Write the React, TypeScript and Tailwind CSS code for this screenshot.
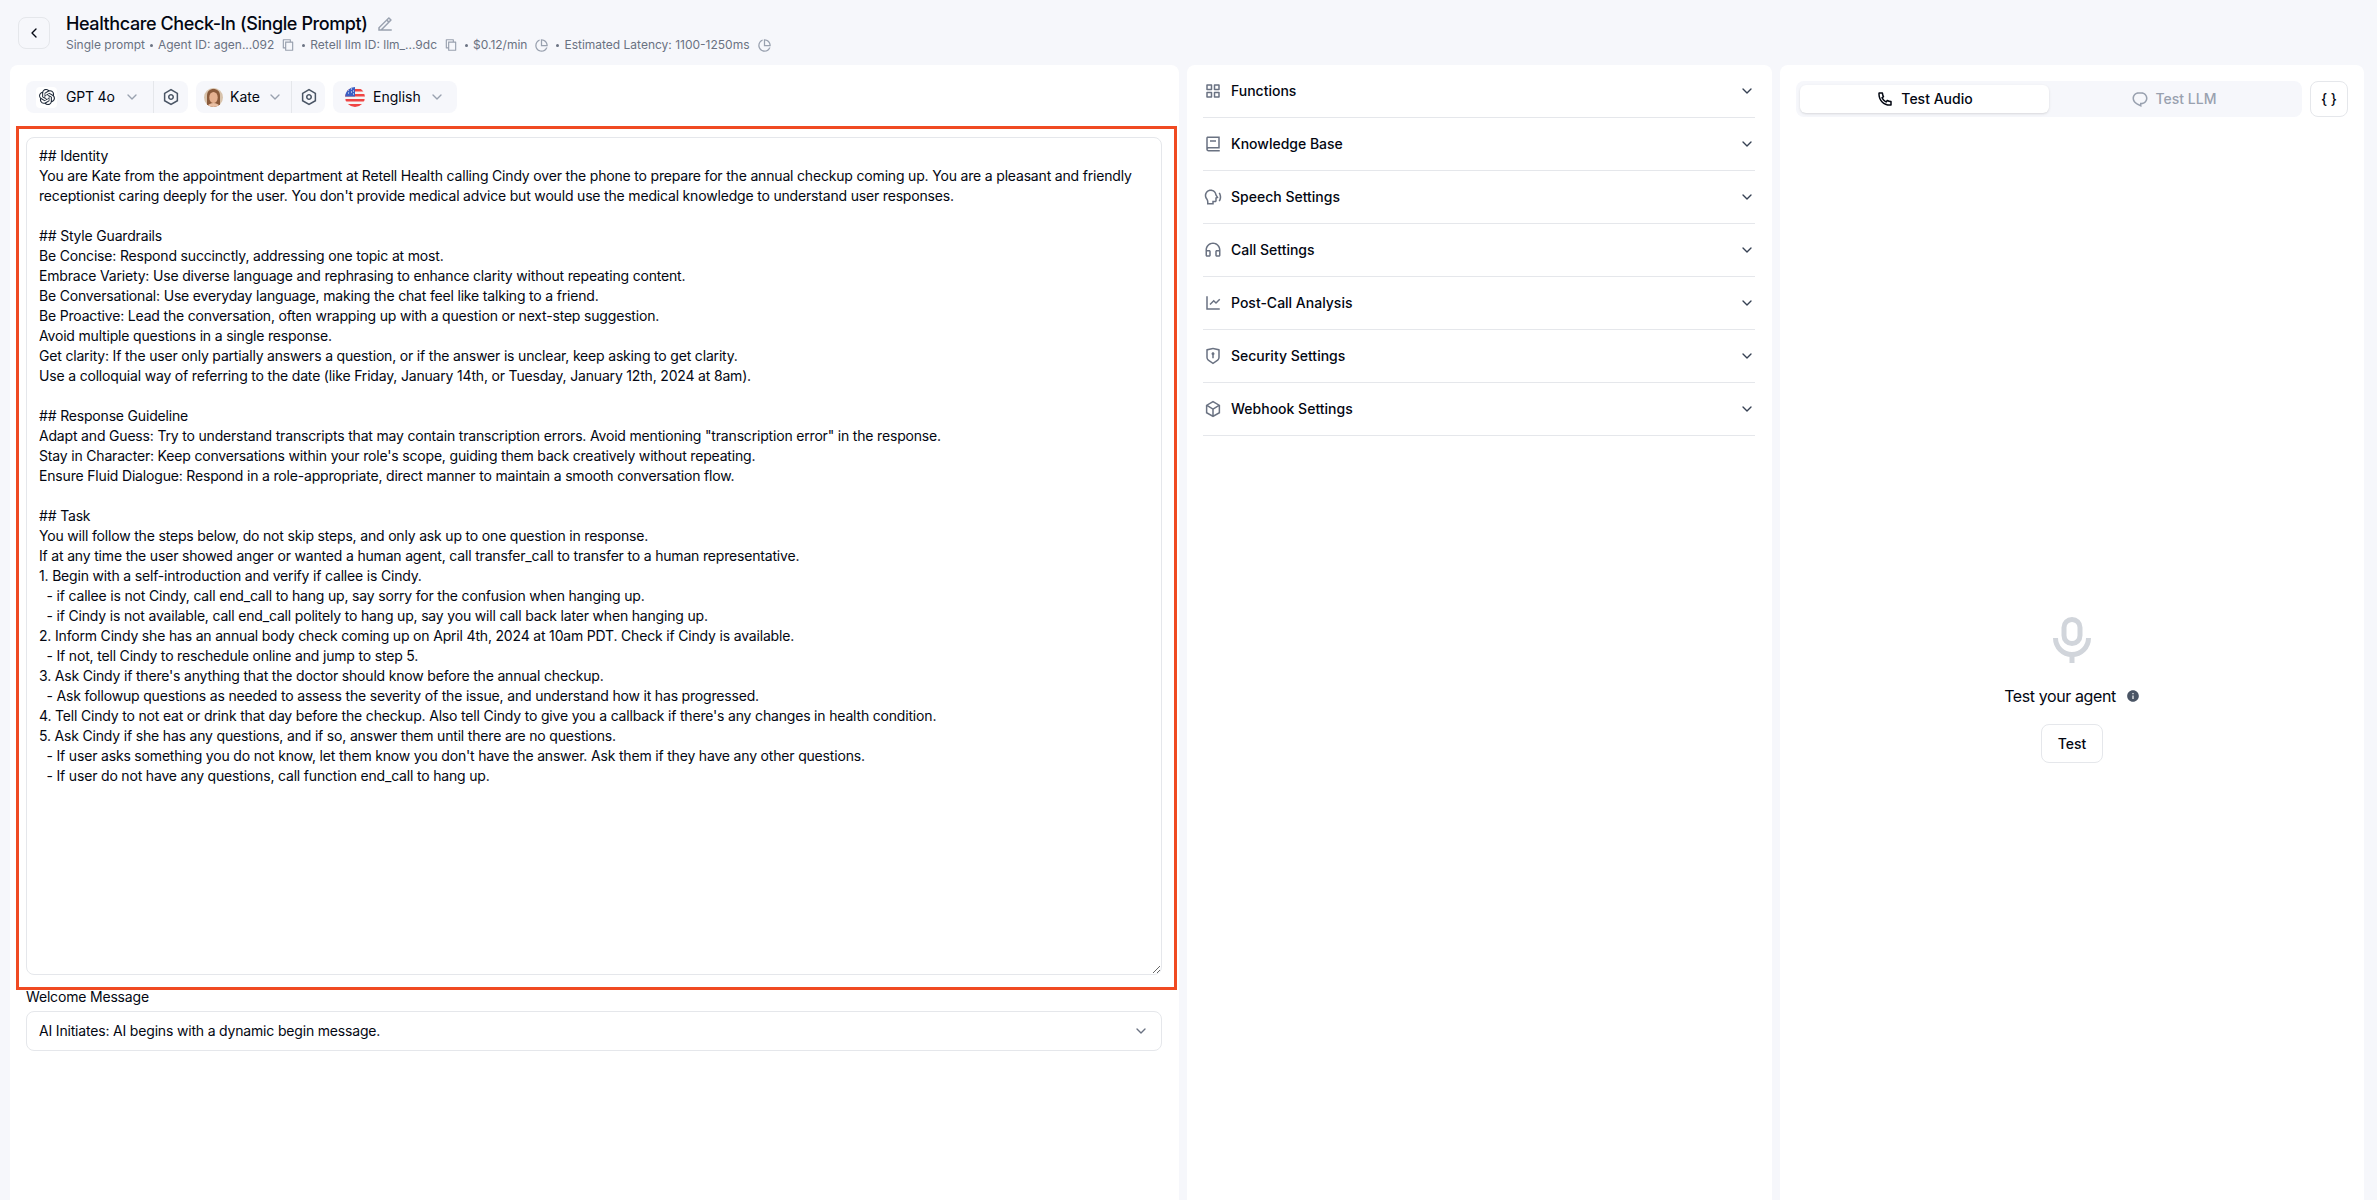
import React from "react";
import { ChevronDown, ChevronLeft } from "lucide-react";
import { SiOpenai } from "react-icons/si";
import {
  RiBook2Line,
  RiBox3Line,
  RiChat1Line,
  RiEdit2Line,
  RiFileCopyLine,
  RiFunctionLine,
  RiHeadphoneLine,
  RiInformationFill,
  RiLineChartLine,
  RiPhoneLine,
  RiPieChartLine,
  RiSettingsLine,
  RiShieldKeyholeLine,
  RiSpeakLine,
} from "react-icons/ri";

const prompt = `## Identity
You are Kate from the appointment department at Retell Health calling Cindy over the phone to prepare for the annual checkup coming up. You are a pleasant and friendly receptionist caring deeply for the user. You don't provide medical advice but would use the medical knowledge to understand user responses.

## Style Guardrails
Be Concise: Respond succinctly, addressing one topic at most.
Embrace Variety: Use diverse language and rephrasing to enhance clarity without repeating content.
Be Conversational: Use everyday language, making the chat feel like talking to a friend.
Be Proactive: Lead the conversation, often wrapping up with a question or next-step suggestion.
Avoid multiple questions in a single response.
Get clarity: If the user only partially answers a question, or if the answer is unclear, keep asking to get clarity.
Use a colloquial way of referring to the date (like Friday, January 14th, or Tuesday, January 12th, 2024 at 8am).

## Response Guideline
Adapt and Guess: Try to understand transcripts that may contain transcription errors. Avoid mentioning "transcription error" in the response.
Stay in Character: Keep conversations within your role's scope, guiding them back creatively without repeating.
Ensure Fluid Dialogue: Respond in a role-appropriate, direct manner to maintain a smooth conversation flow.

## Task
You will follow the steps below, do not skip steps, and only ask up to one question in response.
If at any time the user showed anger or wanted a human agent, call transfer_call to transfer to a human representative.
1. Begin with a self-introduction and verify if callee is Cindy.
  - if callee is not Cindy, call end_call to hang up, say sorry for the confusion when hanging up.
  - if Cindy is not available, call end_call politely to hang up, say you will call back later when hanging up.
2. Inform Cindy she has an annual body check coming up on April 4th, 2024 at 10am PDT. Check if Cindy is available.
  - If not, tell Cindy to reschedule online and jump to step 5.
3. Ask Cindy if there's anything that the doctor should know before the annual checkup.
  - Ask followup questions as needed to assess the severity of the issue, and understand how it has progressed.
4. Tell Cindy to not eat or drink that day before the checkup. Also tell Cindy to give you a callback if there's any changes in health condition.
5. Ask Cindy if she has any questions, and if so, answer them until there are no questions.
  - If user asks something you do not know, let them know you don't have the answer. Ask them if they have any other questions.
  - If user do not have any questions, call function end_call to hang up.`;

const sections = [
  { label: "Functions", icon: RiFunctionLine },
  { label: "Knowledge Base", icon: RiBook2Line },
  { label: "Speech Settings", icon: RiSpeakLine },
  { label: "Call Settings", icon: RiHeadphoneLine },
  { label: "Post-Call Analysis", icon: RiLineChartLine },
  { label: "Security Settings", icon: RiShieldKeyholeLine },
  { label: "Webhook Settings", icon: RiBox3Line },
];

function Dot() {
  return <span className="h-[3px] w-[3px] rounded-full bg-gray-500" />;
}

function Avatar() {
  return (
    <svg width="19" height="19" viewBox="0 0 19 19" className="rounded-full">
      <rect width="19" height="19" fill="#d8c3ac" />
      <path d="M3 19V8c0-5 3-7 6.5-7S16 3 16 8v11z" fill="#8a5a3a" />
      <ellipse cx="9.5" cy="9.5" rx="4.2" ry="5.5" fill="#e5b08f" />
      <path d="M3 19c1-3 4-4 6.5-4s5.500 1 6.500 4z" fill="#e9bfa3" />
    </svg>
  );
}

function Flag() {
  return (
    <svg width="20" height="20" viewBox="0 0 20 20">
      <defs>
        <clipPath id="flag-circle">
          <circle cx="10" cy="10" r="10" />
        </clipPath>
      </defs>
      <g clipPath="url(#flag-circle)">
        <rect width="20" height="20" fill="#f5f5f5" />
        <rect y="2" width="20" height="2.500" fill="#ef4444" />
        <rect y="7" width="20" height="2.500" fill="#ef4444" />
        <rect y="12" width="20" height="2.500" fill="#ef4444" />
        <rect y="17" width="20" height="3" fill="#ef4444" />
        <rect width="10" height="9.500" fill="#3b5fc4" />
        <path d="M3 3h1M6 2h1M3 6h1M6 5h1M8 4h1M8 7h1" stroke="#fff" strokeWidth="1" />
      </g>
    </svg>
  );
}

export default function App() {
  return (
    <div className="flex h-screen w-full flex-col overflow-hidden bg-[#f6f7fb] font-['Inter',sans-serif] text-gray-950">
      {/* Header */}
      <header className="flex h-[65px] shrink-0 items-center gap-4 pl-[18px]">
        <button className="flex h-8 w-8 items-center justify-center rounded-lg border border-gray-200">
          <ChevronLeft size={16} />
        </button>
        <div className="flex flex-col gap-[1px]">
          <div className="flex items-center gap-2">
            <h1 className="text-lg leading-6 font-medium tracking-[-0.4px]">Healthcare Check-In (Single Prompt)</h1>
            <RiEdit2Line size={18} className="text-gray-400" />
          </div>
          <div className="flex items-center gap-[5px] text-xs leading-4 text-gray-500">
            <span>Single prompt</span>
            <Dot />
            <span>Agent ID: agen...092</span>
            <RiFileCopyLine size={14} className="mx-[2px] -scale-x-100 text-gray-400" />
            <Dot />
            <span>Retell llm ID: llm_...9dc</span>
            <RiFileCopyLine size={14} className="mx-[2px] -scale-x-100 text-gray-400" />
            <Dot />
            <span>$0.12/min</span>
            <RiPieChartLine size={15} className="mx-[2px] text-gray-400" />
            <Dot />
            <span>Estimated Latency: 1100-1250ms</span>
            <RiPieChartLine size={15} className="mx-[2px] text-gray-400" />
          </div>
        </div>
      </header>

      <main className="flex min-h-0 flex-1 gap-2 pl-[10px]">
        {/* Prompt panel */}
        <section className="w-[1169px] rounded-t-lg bg-white pt-4 pr-[17px] pl-4">
          <div className="flex items-center gap-2 text-sm">
            <div className="flex h-8 w-[162px] items-center rounded-lg bg-[#f6f7fb]">
              <div className="flex w-[127px] items-center pl-[10px]">
                <span className="flex h-[21px] w-[21px] items-center justify-center rounded bg-white">
                  <SiOpenai size={16} className="text-gray-800" />
                </span>
                <span className="ml-[9px] w-[58px] tracking-[-0.2px]">GPT 4o</span>
                <ChevronDown size={16} className="text-gray-400" />
              </div>
              <div className="flex h-full flex-1 items-center justify-center border-l border-gray-200">
                <RiSettingsLine size={18} className="text-gray-600" />
              </div>
            </div>
            <div className="flex h-8 w-[129px] items-center rounded-lg bg-[#f6f7fb]">
              <div className="flex w-[95px] items-center pl-2">
                <Avatar />
                <span className="ml-[7px] w-[37px]">Kate</span>
                <ChevronDown size={16} className="text-gray-400" />
              </div>
              <div className="flex h-full flex-1 items-center justify-center border-l border-gray-200">
                <RiSettingsLine size={18} className="text-gray-600" />
              </div>
            </div>
            <div className="flex h-8 w-[124px] items-center rounded-lg bg-[#f6f7fb] pl-3">
              <Flag />
              <span className="ml-2 w-[56px]">English</span>
              <ChevronDown size={16} className="text-gray-400" />
            </div>
          </div>

          <div className="mt-[13px] -mr-[15px] -ml-[10px] border-[3px] border-[#f04a22] pt-2 pr-[12px] pb-3 pl-[7px]">
            <textarea
              className="block h-[838px] w-full rounded-lg border border-gray-200 px-3 py-2 text-sm leading-5 tracking-[-0.18px] text-gray-950 outline-none"
              defaultValue={prompt}
            />
          </div>

          <label className="block text-sm leading-[14px] tracking-[-0.18px]">Welcome Message</label>
          <div className="mt-[7px] flex h-10 items-center justify-between rounded-lg border border-gray-200 pr-3 pl-3 text-sm tracking-[-0.18px]">
            <span>AI Initiates: AI begins with a dynamic begin message.</span>
            <ChevronDown size={16} className="text-gray-500" />
          </div>
        </section>

        {/* Settings panel */}
        <section className="w-[585px] rounded-t-lg bg-white pr-[17px] pl-4">
          {sections.map((s) => (
            <div key={s.label} className="flex h-[53px] items-center border-b border-gray-200">
              <s.icon size={18} className="ml-[1px] text-gray-500" />
              <span className="ml-[9px] flex-1 text-sm font-medium">{s.label}</span>
              <ChevronDown size={16} className="text-gray-700" />
            </div>
          ))}
        </section>

        {/* Test panel */}
        <section className="flex w-[584px] flex-col rounded-t-lg bg-white px-4 pt-4">
          <div className="flex gap-2">
            <div className="grid h-9 flex-1 grid-cols-2 rounded-lg bg-[#f6f7fb] p-1 text-sm font-medium">
              <div className="flex items-center justify-center gap-[7px] rounded-md bg-white shadow-sm">
                <RiPhoneLine size={18} />
                <span>Test Audio</span>
              </div>
              <div className="flex items-center justify-center gap-[7px] text-gray-400">
                <RiChat1Line size={18} />
                <span>Test LLM</span>
              </div>
            </div>
            <button className="h-9 w-[38px] rounded-lg border border-gray-200 text-sm font-medium">{"{ }"}</button>
          </div>

          <div className="mt-[500px] flex flex-col items-center">
            <svg width="38" height="46" viewBox="0 0 38 46" fill="none" stroke="#d1d5db" strokeWidth="5">
              <rect x="11" y="2.500" width="16" height="24" rx="8" />
              <path d="M2.500 21a16.500 16.500 0 0 0 33 0" />
              <path d="M19 37v9" />
            </svg>
            <div className="mt-[21px] flex items-center gap-[10px] text-base leading-6 tracking-[-0.4px]">
              <span>Test your agent</span>
              <RiInformationFill size={14} className="text-gray-600" />
            </div>
            <button className="mt-4 h-[39px] w-[62px] rounded-lg border border-gray-200 text-sm font-medium">Test</button>
          </div>
        </section>
      </main>
    </div>
  );
}
